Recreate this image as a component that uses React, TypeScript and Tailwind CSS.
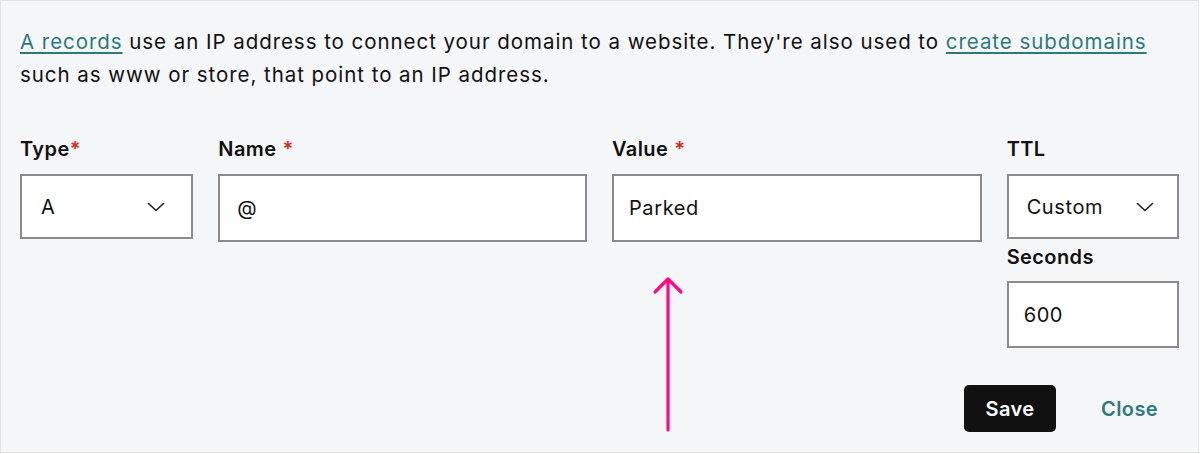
import React from "react";

const font = { fontFamily: "Inter, 'Liberation Sans', sans-serif" };

function Chevron() {
  return (
    <svg width="18" height="10" viewBox="0 0 18 10" fill="none">
      <path d="M1.5 1.5 9 8.5l7.5-7" stroke="#1f1f1f" strokeWidth="1.6" strokeLinecap="round" />
    </svg>
  );
}

function Label({ text, required, tight }: { text: string; required?: boolean; tight?: boolean }) {
  return (
    <div className="h-[38px] text-[20px] font-semibold text-[#111] leading-[26px] tracking-[0.4px]">
      {text}
      {required && <span className={"text-[#d9261c] " + (tight ? "" : "ml-1.5")}>*</span>}
    </div>
  );
}

export default function App() {
  return (
    <div style={font} className="w-[1199px] h-[453px] bg-[#f5f6f8] border border-[#e2e3e6] relative text-[#111]">
      <p className="pt-[24px] pl-[19px] pr-[20px] text-[20.5px] leading-[33px] tracking-[0.95px]">
        <a className="text-[#2d7a7d] underline underline-offset-[3px]">A records</a> use an IP address to connect
        your domain to a website. They're also used to{" "}
        <a className="text-[#2d7a7d] underline underline-offset-[3px]">create subdomains</a> such as www or store,
        that point to an IP address.
      </p>

      <div className="flex gap-[25px] pl-[19px] pr-[19px] mt-[45px] text-[20px] tracking-[0.6px]">
        <div className="w-[174px]">
          <Label text="Type" required tight />
          <div className="h-[65px] bg-white border-2 border-[#8a8a8a] flex items-center justify-between pl-[19px] pr-[26px]">
            <span>A</span>
            <Chevron />
          </div>
        </div>
        <div className="w-[370px]">
          <Label text="Name" required />
          <div className="h-[68px] bg-white border-2 border-[#8a8a8a] flex items-center px-[17px]">@</div>
        </div>
        <div className="w-[371px]">
          <Label text="Value" required />
          <div className="h-[68px] bg-white border-2 border-[#8a8a8a] flex items-center px-[15px]">Parked</div>
        </div>
        <div className="w-[173px]">
          <Label text="TTL" />
          <div className="h-[65px] bg-white border-2 border-[#8a8a8a] flex items-center justify-between pl-[18px] pr-[23px]">
            <span>Custom</span>
            <Chevron />
          </div>
          <div className="mt-[5px] font-semibold leading-[26px] h-[37px] tracking-[0.4px]">Seconds</div>
          <div className="h-[67px] bg-white border-2 border-[#8a8a8a] flex items-center px-[15px]">600</div>
        </div>
      </div>

      <div className="flex justify-end items-center pr-[40px] mt-[37px] gap-[45px] tracking-[0.4px]">
        <button className="w-[92px] h-[47px] bg-[#111] text-white rounded-[5px] text-[20px] font-semibold">Save</button>
        <button className="text-[#2d7a7d] text-[20px] font-semibold">Close</button>
      </div>

      <svg className="absolute left-[650px] top-[274px]" width="34" height="158" viewBox="0 0 34 158" fill="none">
        <path d="M17 5v150M4 17 17 4l13 13" stroke="#ff0a84" strokeWidth="3.2" strokeLinecap="round" strokeLinejoin="round" />
      </svg>
    </div>
  );
}
